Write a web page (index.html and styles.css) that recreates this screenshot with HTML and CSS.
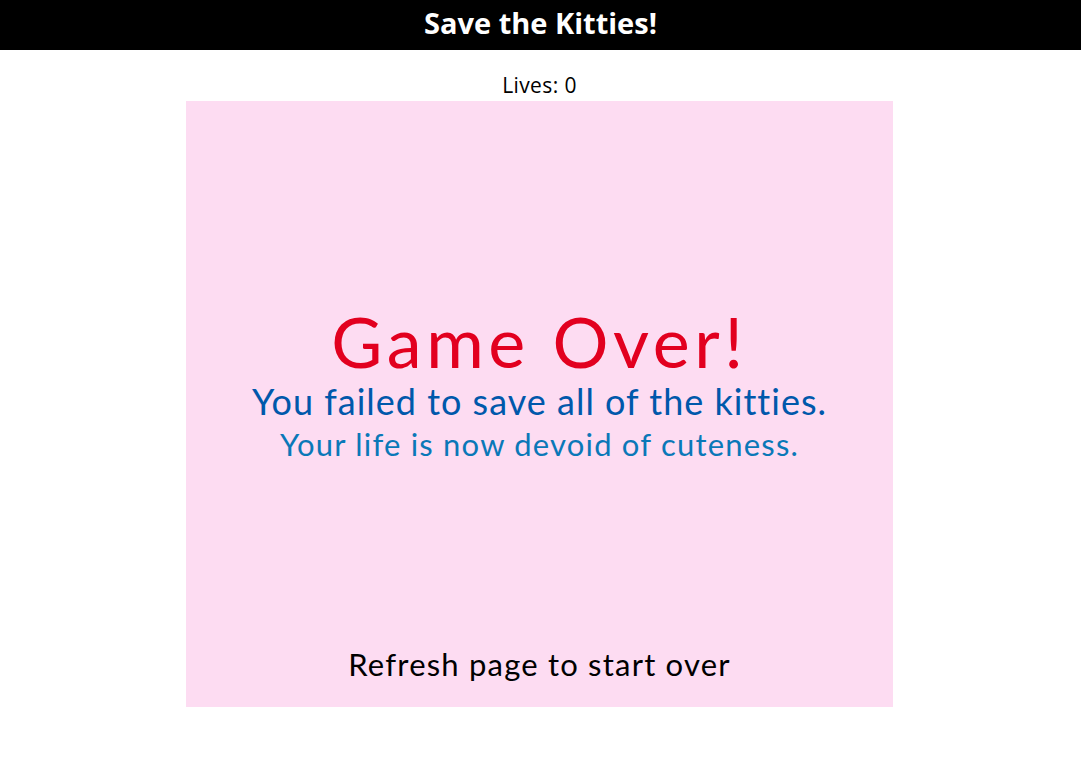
FILE: index.html
```html
<!DOCTYPE html>
<html>
<head>
<meta charset="utf-8">
<title>Save the Kitties!</title>
<link rel="stylesheet" href="styles.css">
</head>
<body>
<header class="topbar"><h1 class="title">Save the Kitties!</h1></header>
<main class="page">
  <div class="lives">Lives: 0</div>
  <section class="board">
    <div class="message">
      <div class="over">Game Over!</div>
      <div class="failed">You failed to save all of the kitties.</div>
      <div class="devoid">Your life is now devoid of cuteness.</div>
    </div>
    <div class="refresh">Refresh page to start over</div>
  </section>
</main>
</body>
</html>
```

FILE: styles.css
```css
html, body {
  margin: 0;
  padding: 0;
  background: #ffffff;
}
.topbar {
  background: #000000;
  height: 50px;
  display: flex;
  justify-content: center;
}
.title {
  margin: 0;
  color: #ffffff;
  font-family: "Open Sans", sans-serif;
  font-weight: 700;
  font-size: 29px;
  line-height: 46px;
}
.page {
  display: flex;
  flex-direction: column;
  align-items: center;
  padding-right: 2px;
}
.lives {
  font-family: "Open Sans", sans-serif;
  font-size: 21px;
  letter-spacing: 0.4px;
  line-height: 24px;
  height: 51px;
  padding-top: 23px;
  box-sizing: border-box;
  color: #000;
}
.board {
  width: 707px;
  height: 606px;
  background: #fddcf2;
  display: flex;
  flex-direction: column;
  align-items: center;
  font-family: "Lato", sans-serif;
}
.message {
  margin-top: 202px;
  display: flex;
  flex-direction: column;
  align-items: center;
}
.over {
  color: #e2001f;
  font-size: 70px;
  letter-spacing: 4.6px;
  line-height: 76px;
}
.failed {
  color: #0058ab;
  font-size: 36px;
  letter-spacing: 1px;
  line-height: 44px;
}
.devoid {
  color: #0a78b8;
  font-size: 31px;
  letter-spacing: 1.2px;
  line-height: 42px;
}
.refresh {
  margin-top: auto;
  margin-bottom: 23px;
  color: #000;
  font-size: 31px;
  letter-spacing: 1.2px;
  line-height: 40px;
}
```
